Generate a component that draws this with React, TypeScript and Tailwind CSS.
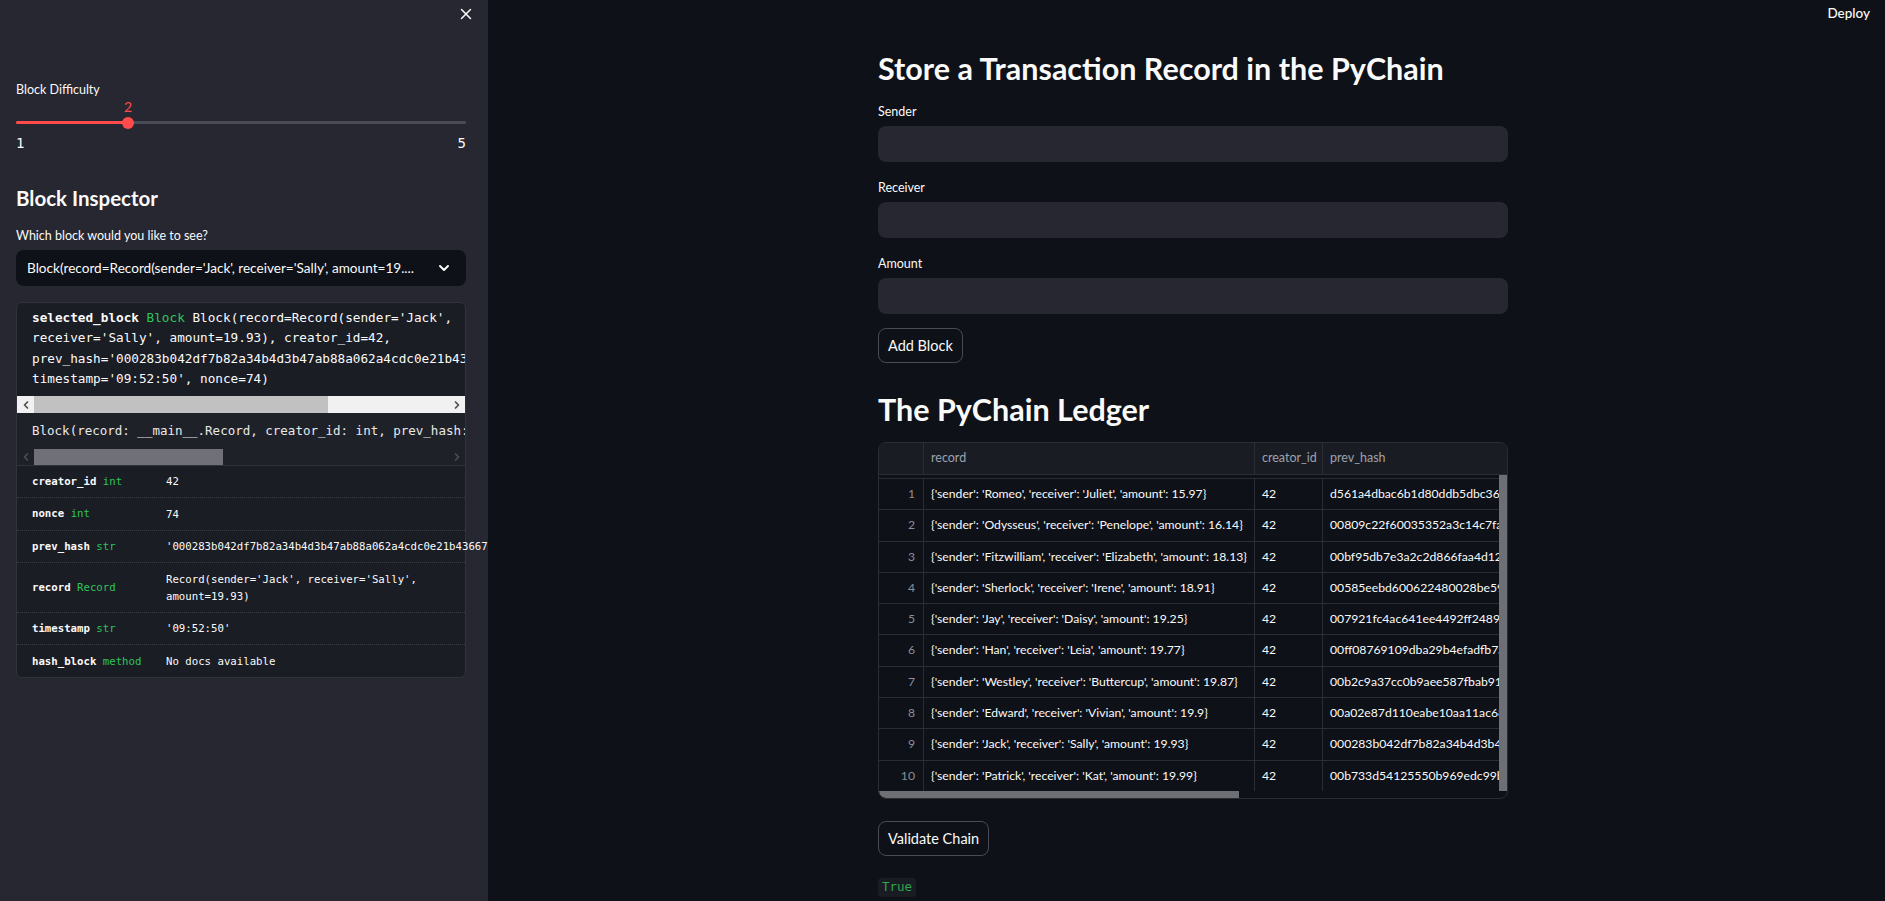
import { X, ChevronDown, ChevronLeft, ChevronRight } from 'lucide-react'

const SANS = "font-['Lato',sans-serif]"
const MONO = "font-['DejaVu_Sans_Mono',monospace]"

const LEDGER = [
  { s: 'Romeo', r: 'Juliet', a: '15.97', h: 'd561a4dbac6b1d80ddb5dbc3659a2f1c' },
  { s: 'Odysseus', r: 'Penelope', a: '16.14', h: '00809c22f60035352a3c14c7fa91e0d2' },
  { s: 'Fitzwilliam', r: 'Elizabeth', a: '18.13', h: '00bf95db7e3a2c2d866faa4d1232b7c4' },
  { s: 'Sherlock', r: 'Irene', a: '18.91', h: '00585eebd600622480028be59ec3d1a0' },
  { s: 'Jay', r: 'Daisy', a: '19.25', h: '007921fc4ac641ee4492ff248919f6b3' },
  { s: 'Han', r: 'Leia', a: '19.77', h: '00ff08769109dba29b4efadfb7a8c2e1' },
  { s: 'Westley', r: 'Buttercup', a: '19.87', h: '00b2c9a37cc0b9aee587fbab911e4d07' },
  { s: 'Edward', r: 'Vivian', a: '19.9', h: '00a02e87d110eabe10aa11ac68015f3b' },
  { s: 'Jack', r: 'Sally', a: '19.93', h: '000283b042df7b82a34b4d3b47ab88a062' },
  { s: 'Patrick', r: 'Kat', a: '19.99', h: '00b733d54125550b969edc99bb4f1e2a' },
]

const FIELDS = [
  { name: 'creator_id', type: 'int', value: ['42'], h: 'h-[32px]' },
  { name: 'nonce', type: 'int', value: ['74'], h: 'h-[33px]' },
  { name: 'prev_hash', type: 'str', value: ["'000283b042df7b82a34b4d3b47ab88a062a4cdc0e21b43667'"], h: 'h-[32px]' },
  { name: 'record', type: 'Record', value: ["Record(sender='Jack', receiver='Sally',", 'amount=19.93)'], h: 'h-[50px]' },
  { name: 'timestamp', type: 'str', value: ["'09:52:50'"], h: 'h-[32px]' },
  { name: 'hash_block', type: 'method', value: ['No docs available'], h: 'h-[33px]' },
]

function Label({ children }: { children: React.ReactNode }) {
  return <div className="text-[12.5px] leading-[20px] text-[#fafafa]">{children}</div>
}

function TextInput({ className = '' }: { className?: string }) {
  return <div className={`h-[36px] rounded-lg bg-[#262730] ${className}`} />
}

function Sidebar() {
  return (
    <aside className="w-[488px] shrink-0 h-full bg-[#262730] overflow-hidden pl-4 pr-[22px]">
      <div className="h-[28px] flex items-center justify-end -mr-[9px]">
        <X size={18} strokeWidth={2} className="text-[#fafafa]" />
      </div>

      <div className="mt-[52px]">
        <Label>Block Difficulty</Label>
      </div>

      {/* slider */}
      <div className="mt-[-1px]">
        <div className="relative h-[16px]">
          <span className="absolute left-[112px] -translate-x-1/2 top-0 text-[14px] leading-[16px] text-[#ff4b4b]">2</span>
        </div>
        <div className="relative h-[3px] mt-[6px] rounded-full bg-[#4a4c55]">
          <div className="absolute left-0 top-0 h-[3px] w-[112px] rounded-full bg-[#ff4b4b]" />
          <div className="absolute left-[106px] top-[-4.5px] w-[12px] h-[12px] rounded-full bg-[#ff4b4b]" />
        </div>
        <div className={`mt-[11px] flex justify-between text-[14px] leading-[16px] text-[#fafafa] ${MONO}`}>
          <span>1</span>
          <span>5</span>
        </div>
      </div>

      <h2 className="mt-[33px] text-[20.5px] leading-[28px] font-bold text-[#fafafa]">Block Inspector</h2>

      <div className="mt-[14px]">
        <Label>Which block would you like to see?</Label>
      </div>

      <div className="mt-[4px] h-[36px] rounded-lg bg-[#0e1117] flex items-center pl-[11px] pr-[14px]">
        <span className="flex-1 whitespace-nowrap overflow-hidden text-[13.6px] text-[#fafafa]">
          Block(record=Record(sender='Jack', receiver='Sally', amount=19....
        </span>
        <ChevronDown size={16} strokeWidth={3} className="text-[#fafafa] ml-2" />
      </div>

      {/* help output */}
      <div className={`mt-[16px] h-[376px] rounded-md border border-[#31333c] bg-[#1b1d25] text-[#fafafa] ${MONO}`}>
        <div className="overflow-hidden rounded-t-md">
          <div className="pt-[5px] pb-[7px] pl-[15px] text-[12.7px] leading-[20.3px] whitespace-pre">
            <div>
              <span className="font-bold">selected_block</span> <span className="text-[#2ec45a]">Block</span> Block(record=Record(sender='Jack',
            </div>
            <div>receiver='Sally', amount=19.93), creator_id=42,</div>
            <div>prev_hash='000283b042df7b82a34b4d3b47ab88a062a4cdc0e21b43667',</div>
            <div>timestamp='09:52:50', nonce=74)</div>
          </div>
          <div className="h-[17px] bg-[#f1f1f1] flex items-center">
            <div className="w-[17px] flex justify-center">
              <ChevronLeft size={12} strokeWidth={3.5} className="text-[#505050]" />
            </div>
            <div className="h-full w-[294px] bg-[#c1c1c1]" />
            <div className="flex-1" />
            <div className="w-[17px] flex justify-center">
              <ChevronRight size={12} strokeWidth={3.5} className="text-[#505050]" />
            </div>
          </div>
        </div>
        <div className="overflow-hidden bg-[#1f2129]">
          <div className="h-[36px] pl-[15px] flex items-center text-[12.5px] whitespace-pre text-[#e8e8e8]">
            Block(record: __main__.Record, creator_id: int, prev_hash: str, timestamp: str, nonce: int = 0)
          </div>
          <div className="h-[17px] flex items-center border-b border-[#31333c]">
            <div className="w-[17px] flex justify-center">
              <ChevronLeft size={12} strokeWidth={3.5} className="text-[#4b4d55]" />
            </div>
            <div className="h-full w-[189px] bg-[#707178]" />
            <div className="flex-1" />
            <div className="w-[17px] flex justify-center">
              <ChevronRight size={12} strokeWidth={3.5} className="text-[#4b4d55]" />
            </div>
          </div>
        </div>
        {FIELDS.map((f, i) => (
          <div
            key={f.name}
            className={`${f.h} flex items-center text-[10.7px] ${i < FIELDS.length - 1 ? 'border-b border-dotted border-[#3a3c45]' : ''}`}
          >
            <div className="w-[149px] pl-[15px] shrink-0 whitespace-pre">
              <span className="font-bold">{f.name}</span> <span className="text-[#2ec45a]">{f.type}</span>
            </div>
            <div className="whitespace-pre leading-[17px]">
              {f.value.map((v) => (
                <div key={v}>{v}</div>
              ))}
            </div>
          </div>
        ))}
      </div>
    </aside>
  )
}

function Ledger() {
  const cell = 'border-r border-[#2a2d36] flex items-center'
  return (
    <div className="relative mt-[14px] h-[357px] rounded-lg border border-[#2a2d36] overflow-hidden text-[12.2px]">
      <div className="h-[32px] flex bg-[#1a1c24] border-b border-[#2a2d36] text-[#9ea2ad] text-[12.5px]">
        <div className={`w-[45px] shrink-0 ${cell}`} />
        <div className={`w-[331px] shrink-0 pl-[7px] ${cell}`}>record</div>
        <div className={`w-[68px] shrink-0 pl-[7px] whitespace-nowrap overflow-hidden ${cell}`}>creator_id</div>
        <div className="flex-1 pl-[7px] flex items-center">prev_hash</div>
      </div>
      <div className="h-[3px]" />
      {LEDGER.map((r, i) => (
        <div key={i} className="h-[31.3px] flex border-t border-[#2a2d36] text-[#fafafa]">
          <div className={`w-[45px] shrink-0 justify-end pr-[8px] text-[#8b8f99] ${cell}`}>{i + 1}</div>
          <div className={`w-[331px] shrink-0 pl-[7px] whitespace-nowrap overflow-hidden ${cell}`}>
            {`{'sender': '${r.s}', 'receiver': '${r.r}', 'amount': ${r.a}}`}
          </div>
          <div className={`w-[68px] shrink-0 pl-[7px] ${cell}`}>42</div>
          <div className="flex-1 pl-[7px] flex items-center whitespace-nowrap overflow-hidden">{r.h}</div>
        </div>
      ))}
      {/* scrollbars */}
      <div className="absolute right-0 top-[32px] bottom-[7px] w-[8px] bg-[#6e6f75]" />
      <div className="absolute left-0 bottom-0 h-[7px] w-[360px] rounded-bl-lg bg-[#6e6f75]" />
    </div>
  )
}

function Button({ children, className = '' }: { children: React.ReactNode; className?: string }) {
  return (
    <div
      className={`inline-flex items-center h-[35px] px-[9px] rounded-lg border border-[#4a4c53] bg-[#0e1117] text-[14.5px] text-[#fafafa] ${className}`}
    >
      {children}
    </div>
  )
}

export default function App() {
  return (
    <div className={`flex h-[901px] w-full overflow-hidden bg-[#0e1117] ${SANS}`}>
      <Sidebar />
      <main className="flex-1 h-full overflow-hidden">
        <div className="h-[26px] flex items-center justify-end pr-[15px]">
          <span className="text-[13.5px] font-medium text-[#fafafa]">Deploy</span>
        </div>
        <div className="ml-[390px] w-[630px]">
          <h1 className="mt-[23px] text-[30.5px] leading-[38px] font-bold text-[#fafafa]">
            Store a Transaction Record in the PyChain
          </h1>

          <div className="mt-[15px]">
            <Label>Sender</Label>
          </div>
          <TextInput className="mt-[4px]" />

          <div className="mt-[16px]">
            <Label>Receiver</Label>
          </div>
          <TextInput className="mt-[4px]" />

          <div className="mt-[16px]">
            <Label>Amount</Label>
          </div>
          <TextInput className="mt-[4px]" />

          <Button className="mt-[14px]">Add Block</Button>

          <h1 className="mt-[27px] text-[30.5px] leading-[38px] font-bold text-[#fafafa]">The PyChain Ledger</h1>

          <div className="mt-[2px]">
            <Ledger />
          </div>

          <Button className="mt-[22px]">Validate Chain</Button>

          <div className="mt-[17px]">
            <span className={`inline-flex items-center h-[19px] px-[4px] rounded bg-[#1a1c24] text-[12.5px] text-[#2ea44f] ${MONO}`}>
              True
            </span>
          </div>
        </div>
      </main>
    </div>
  )
}
